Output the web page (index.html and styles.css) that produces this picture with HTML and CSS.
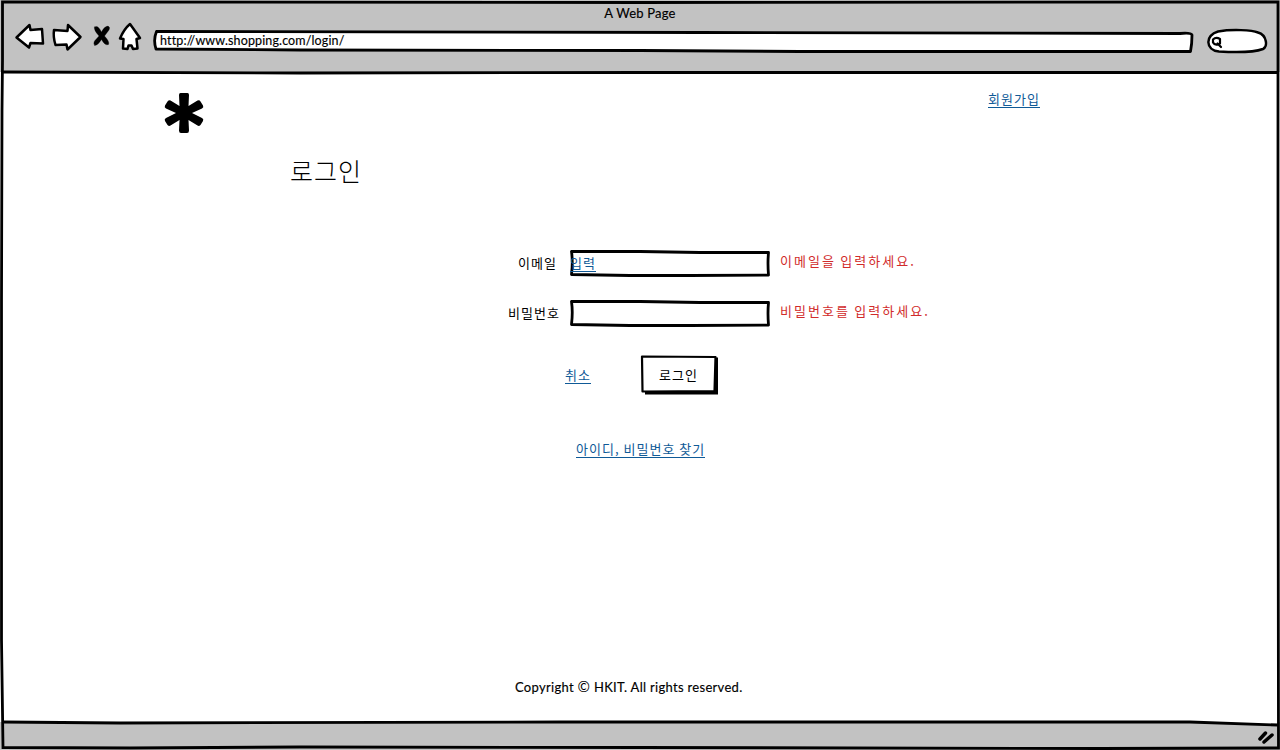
FILE: index.html
```html
<!DOCTYPE html>
<html lang="ko">
<head>
<meta charset="utf-8">
<title>A Web Page</title>
<link rel="stylesheet" href="styles.css">
</head>
<body>
<div class="window">
  <header class="chrome">
    <div class="chrome-title">A Web Page</div>
    <div class="toolbar">
      <svg class="tool tool-back" viewBox="14 22 34 32"><path d="M16.5 37.5L29.500 25L30.500 30L42 29L43 43.500L30.500 43L29 47.500Z"/></svg>
      <svg class="tool tool-forward" viewBox="48 22 38 32"><path d="M54 30L67.500 31L68 25L80.500 37L67.500 49.500L66.500 44.500L55.500 45Q53 37 54 30Z"/></svg>
      <svg class="tool tool-stop" viewBox="86 22 30 32"><path class="solid" d="M94.500 27Q98 24.500 101.500 32Q104 26.500 108 26Q110.500 27 109 30L104.500 36Q110 42 108.500 44.500Q105 46 101.500 39.500Q98 45.500 94.500 45.500Q93 43.500 94.500 41L99 36Q93.500 30 94.500 27Z"/></svg>
      <svg class="tool tool-home" viewBox="116 22 32 32"><path d="M130 24L140 38L136.500 39L137.500 48.500L133 49L131.500 45.500L128.500 45.500L127.500 49L123 48.500L123.500 39L120 38.500Q124 29 130 24Z"/></svg>
      <div class="url">
        <svg class="sketch" viewBox="148 22 1052 32"><path d="M156.500 31.500L700 32.500L1180 33.500Q1191 32.500 1192 35Q1192 44 1190.500 51.500L800 51.500L640 50.500L300 50L156 49Q153 40 156.500 31.500Z"/></svg>
        <span class="url-text">http://www.shopping.com/login/</span>
      </div>
      <svg class="tool tool-search" viewBox="1200 22 70 32"><path d="M1218 31.500C1232 29 1252 30 1258 32.500C1267 35 1268 47 1263 49C1252 53 1235 52.500 1219 51.500C1205 50 1205 35 1218 31.500Z"/><path class="lens" d="M1213 39.500Q1216 36.500 1220 39V43.500Q1215 46 1213 42.500ZM1217.500 43.500L1221 47"/></svg>
    </div>
  </header>

  <main class="page">
    <div class="top">
      <svg class="logo" viewBox="0 0 40 42"><path d="M16.500 1H23.500Q25 1 25 3L24.500 14L33.500 8.500Q35.500 7.500 36.500 9.500L39 13.500Q40 15.500 38 16.500L28 21L38 26Q40 27 39 29L36.500 33Q35 34.500 33.500 33.500L24.500 28L25 38.500Q25 41 23 41H17Q15 41 15 38.500L15.500 28L6.500 33.500Q5 34.500 3.500 33L1 29Q0 27 2 26L12 21L2 16.500Q0 15.500 1 13.500L3.500 9.500Q5 7.500 6.500 8.500L15.500 14L15 3Q15 1 16.500 1Z"/></svg>
      <a class="link">회원가입</a>
    </div>
    <h1 class="heading">로그인</h1>
    <form class="form">
      <div class="row">
        <label class="label label-email">이메일</label>
        <div class="field">
          <svg class="sketch" viewBox="570 250 200 27"><path d="M571.500 251.500L640 251.500L700 252.500L768.500 252.500Q767.500 263 768.500 275L690 275.500L630 275.500L571.500 274.500Q573 262 571.500 251.500Z"/></svg>
          <a class="link field-text">입력</a>
        </div>
        <p class="error">이메일을 입력하세요.</p>
      </div>
      <div class="row">
        <label class="label">비밀번호</label>
        <div class="field">
          <svg class="sketch" viewBox="570 250 200 27"><path d="M571.500 251.500L640 251.500L700 252.500L768.500 252.500Q767.500 263 768.500 275L690 275.500L630 275.500L571.500 274.500Q573 262 571.500 251.500Z"/></svg>
        </div>
        <p class="error">비밀번호를 입력하세요.</p>
      </div>
      <div class="actions">
        <a class="link cancel">취소</a>
        <div class="button">
          <svg class="sketch" viewBox="640 355 80 41"><path class="solid" d="M714.500 357.500H718V394.500H645V390.500H714.500Z"/><path class="button-face" d="M642 356.500L715.500 357L714.500 391L642.500 391.500Z"/></svg>
          <span class="button-text">로그인</span>
        </div>
      </div>
      <a class="link find">아이디, 비밀번호 찾기</a>
    </form>
    <p class="copyright">Copyright <span class="copy-sign">©</span> HKIT. All rights reserved.</p>
  </main>

  <footer class="statusbar">
    <svg class="grip" viewBox="1256 728 20 18"><path d="M1260 739L1265.500 733M1264 742L1272 735"/></svg>
  </footer>

  <svg class="frame" viewBox="0 0 1280 750">
    <path class="wedge" d="M1100 721H1278V725L1190 722Z"/>
    <path d="M2.500 2L640 2.500L1278 2V375L1278.500 748L1100 748.500L640 747.500L300 747L130 748L3 747.500L1.500 640L1.500 300L2 110L2.500 60Z"/>
    <path d="M3 72L300 73L640 72.500L1278 72.500"/>
    <path d="M3 722L120 723L560 722L1190 722L1278 725"/>
  </svg>
</div>
</body>
</html>
```
FILE: styles.css
```css
* { box-sizing: border-box; }

body {
  margin: 0;
  background: #fff;
  color: #000;
  font-family: "Noto Sans CJK KR", sans-serif;
  font-size: 13px;
}

h1, p { margin: 0; font-weight: 400; }

.window {
  position: relative;
  display: grid;
  grid-template-rows: 72px 1fr 28px;
  width: 1280px;
  height: 750px;
  overflow: hidden;
}

.frame {
  position: absolute;
  inset: 0;
  width: 1280px;
  height: 750px;
  fill: none;
  stroke: #000;
  stroke-width: 2.800;
  pointer-events: none;
}
.frame .wedge { fill: #fff; stroke: none; }

/* browser chrome */
.chrome, .statusbar { background: #c2c2c2; }

.chrome-title {
  height: 22px;
  padding-top: 5px;
  text-align: center;
  font: 13px/17px Lato, sans-serif;
  letter-spacing: .2px;
  -webkit-text-stroke: .15px #000;
}

.toolbar { display: flex; padding-left: 14px; height: 32px; }

.tool {
  height: 32px;
  fill: #fff;
  stroke: #000;
  stroke-width: 2.500;
  stroke-linejoin: round;
  stroke-linecap: round;
}
.tool-back { width: 34px; }
.tool-forward { width: 38px; }
.tool-stop { width: 30px; }
.tool-home { width: 32px; }
.tool-search { width: 70px; }
.tool .solid { fill: #000; stroke: #000; stroke-width: .3; }
.tool .lens { stroke-width: 2.200; }

.sketch {
  position: absolute;
  inset: 0;
  width: 100%;
  height: 100%;
  fill: #fff;
  stroke: #000;
  stroke-width: 2.800;
  stroke-linejoin: round;
}

.url { position: relative; width: 1052px; padding: 10px 0 0 12px; }
.url-text {
  position: relative;
  display: block;
  font: 12.500px/17px Lato, sans-serif;
  letter-spacing: .13px;
  -webkit-text-stroke: .15px #000;
}

/* page */
.page { padding-top: 20px; }

.top {
  display: flex;
  justify-content: space-between;
  width: 1040px;
  padding-left: 164px;
}
.logo {
  width: 40px;
  height: 42px;
}

.link {
  display: block;
  align-self: flex-start;
  height: 16px;
  line-height: 14px;
  letter-spacing: 1.040px;
  white-space: nowrap;
  color: #0f5a97;
  border-bottom: 1px solid #0f5a97;
}

.heading {
  margin: 18px 0 0 290px;
  font-size: 25px;
  font-weight: 300;
  line-height: 36px;
  letter-spacing: 1px;
}

.form { padding-top: 62px; }

.row { display: flex; height: 27px; margin-bottom: 23px; }
.label {
  width: 570px;
  padding-right: 10px;
  text-align: right;
  line-height: 25px;
  letter-spacing: 1.040px;
}
.label-email { padding-right: 13px; }
.field { position: relative; width: 200px; padding-top: 6px; }
.field-text { position: relative; width: 26px; }
.error {
  padding-left: 10px;
  line-height: 22px;
  letter-spacing: 2.040px;
  word-spacing: -1.500px;
  color: #d12b2b;
}

.actions { display: flex; padding: 5px 0 0 565px; height: 92px; }
.cancel { margin-top: 13px; }
.button {
  position: relative;
  width: 80px;
  height: 41px;
  margin-left: 49px;
  padding: 12px 0 0 19px;
}
.button .solid { fill: #000; stroke: none; }
.button-face { stroke-width: 2.200; }
.button-text {
  position: relative;
  display: block;
  line-height: 16px;
  letter-spacing: 1.040px;
}
.find { width: 129px; margin-left: 576px; word-spacing: -.900px; }

.copyright {
  margin: 220px 0 0 515px;
  font: 13px/17px Lato, sans-serif;
  letter-spacing: .3px;
  white-space: nowrap;
  -webkit-text-stroke: .15px #000;
}
.copy-sign {
  font-family: "Noto Sans CJK KR", sans-serif;
  font-size: 15px;
  line-height: 1;
  -webkit-text-stroke: 0;
}

.statusbar { display: flex; justify-content: flex-end; padding: 6px 4px 0 0; }
.grip {
  width: 20px;
  height: 18px;
  stroke: #000;
  stroke-width: 3.500;
  stroke-linecap: round;
}
```
